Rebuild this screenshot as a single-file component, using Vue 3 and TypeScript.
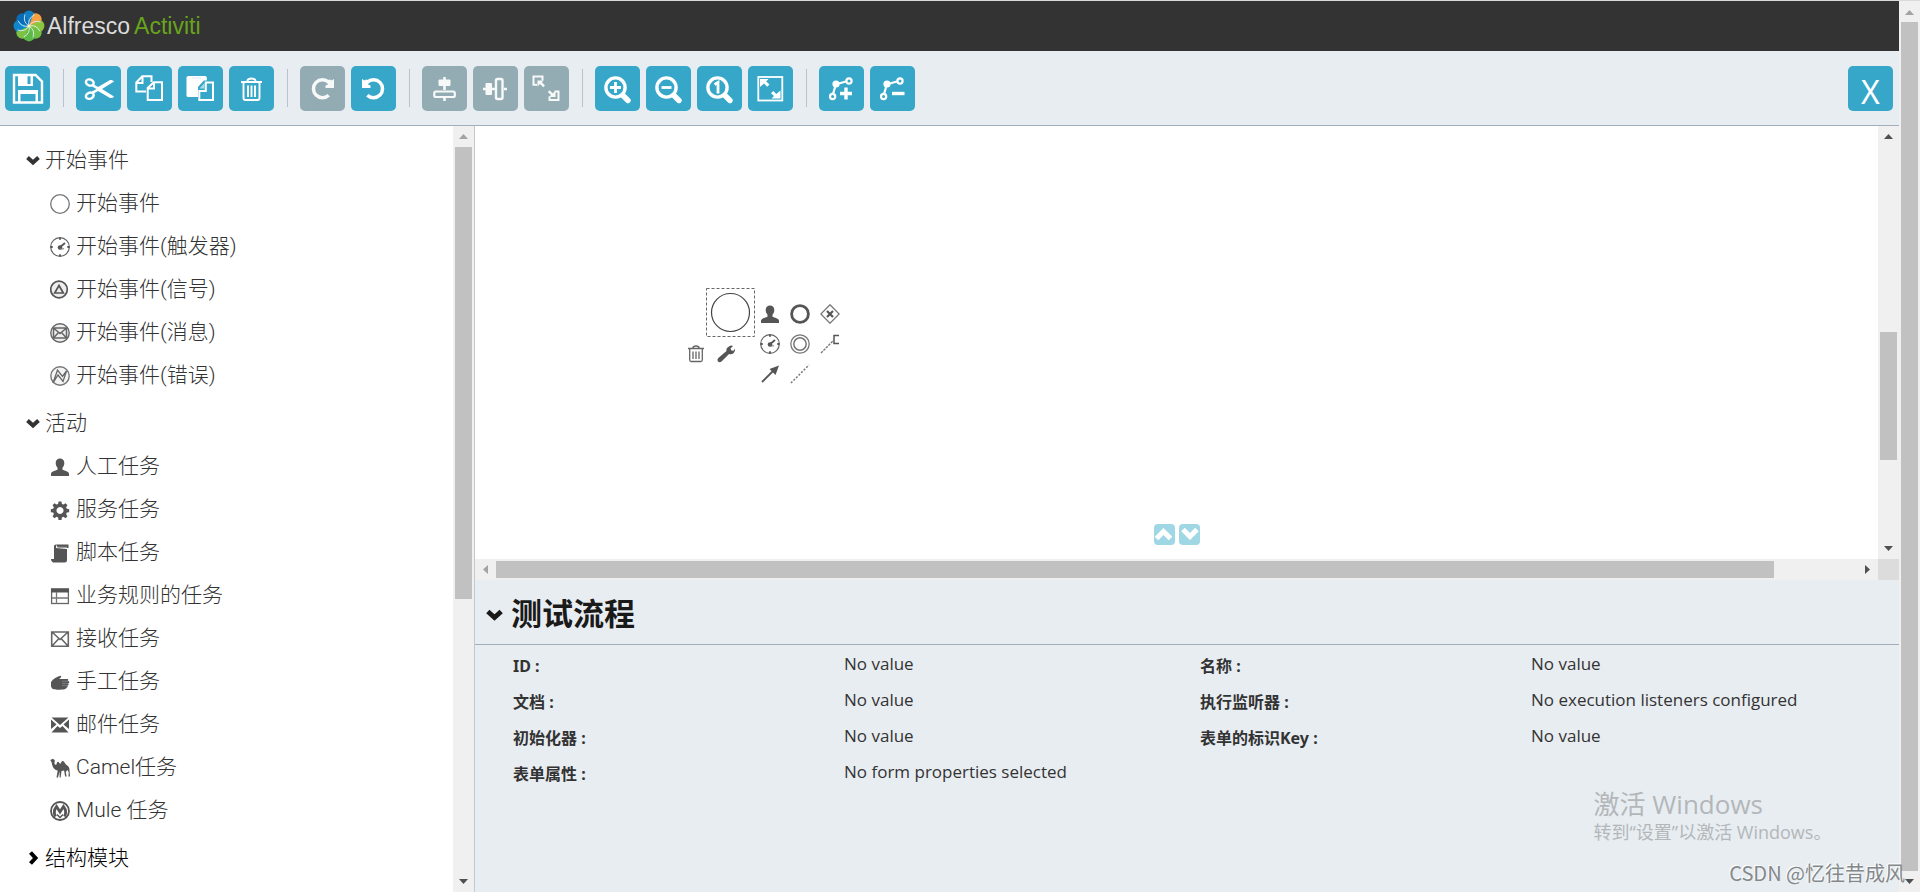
<script setup lang="ts">
interface Tool { id: string; label: string; icon: string; disabled?: boolean }
interface PaletteItem { label: string; icon: string }
interface PaletteGroup { label: string; open: boolean; items: PaletteItem[] }
interface Property { label: string; value: string }

const zoomGlass = '<circle cx="20.5" cy="21.5" r="9.6" fill="none" stroke-width="3.4"/><path d="M28 29.5l5 5" stroke-width="5.4" stroke-linecap="round"/>'
const bendBase = '<path d="M14 28l3-10M18 18l9-2.5" stroke-width="2.2"/><circle cx="17" cy="18" r="3.6" fill="#fff" stroke="none"/><circle cx="13.6" cy="30.5" r="2.6" fill="none" stroke-width="2.2"/><circle cx="30" cy="15" r="2.6" fill="none" stroke-width="2.2"/>'

const toolGroups: Tool[][] = [
  [
    { id: 'save', label: '保存', icon: '<path d="M9 9h21.5l6.500 6.500V36.500H9z" fill="none" stroke-width="2.4"/><path d="M13 8h15v12H13zM22.500 10v8h3v-8z" fill="#fff" fill-rule="evenodd" stroke="none"/><path d="M13 24h20v13h-2.500v-9h-15v9H13z" fill="#fff" stroke="none"/>' },
  ],
  [
    { id: 'cut', label: '剪切', icon: '<ellipse cx="13.8" cy="16.5" rx="4" ry="3" fill="none" stroke-width="2.4" transform="rotate(20 13.8 16.5)"/><ellipse cx="13.8" cy="29.7" rx="4" ry="3" fill="none" stroke-width="2.4" transform="rotate(-20 13.8 29.7)"/><path d="M17 18l5 3 12-7q3-.5 4 1.500L26 23l12 7.500q-1 2-4 1.500l-12-7-5 3-1-2.500 4.500-2.500-4.500-2.500z" fill="#fff" stroke="none"/>' },
    { id: 'copy', label: '复制', icon: '<path d="M19 25.500H9.300V16.500l6-6.300H24.500V16M9.500 17H15.500V10.500" fill="none" stroke-width="2"/><path d="M20.700 22l6-5.800h8.300V34H20.700zM21 22.500h6V16.500" fill="none" stroke-width="2"/>' },
    { id: 'paste', label: '粘贴', icon: '<path d="M8.500 11l1.500-1h17.500l1.300 1v3.500h-3L20 21v10H9.500l-1-1z" fill="#fff" stroke="none"/><path d="M21.300 25h6.500V16.500H35V34H21.300z" fill="none" stroke-width="2"/><path d="M21.500 22.500l5-5.500v5.500z" fill="#a9dde9" stroke="none"/><path d="M14 12h9" stroke="#d5eef4" stroke-width="1"/>' },
    { id: 'delete', label: '删除', icon: '<path d="M12 16h21M18.500 15q0-2.500 4-2.500t4 2.500" fill="none" stroke-width="2"/><path d="M14.500 17v15q0 2 2 2h12q2 0 2-2V17M19 19.500v11.500M22.500 19.500v11.500M26 19.500v11.500" fill="none" stroke-width="1.9"/>' },
  ],
  [
    { id: 'redo', label: '重做', disabled: true, icon: '<path d="M28.700 29.200A9 9 0 1 1 28.700 16.200" fill="none" stroke-width="3.5"/><path d="M34 13v9h-8.500v-2.500l2.500-1-2-4 4-1 1.500 1z" fill="#fff" stroke="none"/>' },
    { id: 'undo', label: '撤销', icon: '<path d="M16.300 29.200A9 9 0 1 0 16.300 16.200" fill="none" stroke-width="3.5"/><path d="M11 13v9h8.500v-2.500l-2.500-1 2-4-4-1-1.500 1z" fill="#fff" stroke="none"/>' },
  ],
  [
    { id: 'align-v', label: '垂直对齐', disabled: true, icon: '<path d="M22.500 11v13M22.500 32v3" stroke-width="2.6"/><rect x="16.5" y="13.5" width="12" height="6.5" rx="1" fill="#fff" stroke="none"/><rect x="12.3" y="25.5" width="20.5" height="5.5" rx="1.5" fill="none" stroke-width="2.2"/>' },
    { id: 'align-h', label: '水平对齐', disabled: true, icon: '<path d="M10 23h12M31 23h3" stroke-width="2.6"/><rect x="12.5" y="17" width="6.5" height="12" rx="1" fill="#fff" stroke="none"/><rect x="23" y="13" width="6.5" height="20" rx="1.5" fill="none" stroke-width="2.4"/>' },
    { id: 'same-size', label: '相同大小', disabled: true, icon: '<path d="M13 18.800H9.500V10.500H18.500V14.500M30.500 25.500h4v8.500H25.500V30.500" fill="none" stroke-width="2"/><path d="M13.500 14.500h6l-1.600 1.700 3.100 3.200-1.800 1.800-3.200-3.100-2.500 2.400zM31.500 31h-6.500l2-2-3.200-3 1.700-1.700 3.200 3 2.800-2.400z" fill="#fff" stroke="none"/>' },
  ],
  [
    { id: 'zoom-in', label: '放大', icon: zoomGlass + '<path d="M15 21.500h11M20.500 16v11" stroke-width="2.8"/>' },
    { id: 'zoom-out', label: '缩小', icon: zoomGlass + '<path d="M15.500 21.500h10" stroke-width="2.8"/>' },
    { id: 'zoom-actual', label: '实际大小', icon: zoomGlass + '<path d="M17.500 18.500l3.500-2v11" fill="none" stroke-width="2.8"/>' },
    { id: 'zoom-fit', label: '适合窗口', icon: '<rect x="10.3" y="11" width="24" height="23.5" fill="none" stroke-width="1.8"/><path d="M12 13h8.500l-2.300 2.500 3.300 3-2.300 2.300-3.200-3.200-4 3.400zM32.500 32.500h-9l2.500-2.500-3-2.800 2.300-2.300 3 3 4.200-3.400z" fill="#fff" stroke="none"/>' },
  ],
  [
    { id: 'bend-add', label: '添加弯曲点', icon: bendBase + '<path d="M21 27.500h12M27 21.500v12" stroke-width="3.4"/>' },
    { id: 'bend-remove', label: '删除弯曲点', icon: bendBase + '<path d="M22 27.500h12.500" stroke-width="3.4"/>' },
  ],
]

const user = '<path d="M10 1.500c2.500 0 4.300 1.500 4.300 4.500 0 2-.8 3.600-1.800 4.800v2c2 1 6.500 1.500 6.500 4.200v2H1v-2c0-2.700 4.500-3.200 6.500-4.200v-2C6.500 9.600 5.700 8 5.700 6c0-3 1.800-4.500 4.300-4.500z" fill="#555"/>'
const timer = '<circle cx="10" cy="10" r="9.3" fill="none" stroke="#666" stroke-width="1.2"/><path d="M10 .5v2.200M10 17.300v2.200M.5 10h2.200M17.300 10h2.200M9 11l6-5" stroke="#555" stroke-width="1.8"/><circle cx="10" cy="10.5" r="2.3" fill="#555"/><path d="M10 12l4-.2" stroke="#777"/>'
const gear = '<path d="M8.500 1.500h3l.4 2.400 1.600.7 2-1.400 2 2-1.400 2 .7 1.600 2.400.4v3l-2.400.4-.7 1.600 1.400 2-2 2-2-1.400-1.600.7-.4 2.400h-3l-.4-2.400-1.600-.7-2 1.400-2-2 1.400-2-.7-1.600-2.400-.4v-3l2.400-.4.7-1.600-1.400-2 2-2 2 1.400 1.600-.7zM10 7a3.500 3.500 0 1 0 .01 0z" fill="#555" fill-rule="evenodd"/>'

const paletteGroups: PaletteGroup[] = [
  {
    label: '开始事件', open: true, items: [
      { label: '开始事件', icon: '<circle cx="10" cy="10" r="9.3" fill="none" stroke="#777" stroke-width="1.3"/>' },
      { label: '开始事件(触发器)', icon: timer },
      { label: '开始事件(信号)', icon: '<circle cx="9" cy="9.5" r="8.3" fill="#eee" stroke="#555" stroke-width="1.7"/><path d="M9 5.500l4.300 7.500H4.700z" fill="none" stroke="#555" stroke-width="1.7"/>' },
      { label: '开始事件(消息)', icon: '<circle cx="10" cy="10" r="9.2" fill="#eee" stroke="#666" stroke-width="1.4"/><path d="M3.500 5h13v10h-13zM3.500 5l6.500 5.500L16.500 5M3.500 15l5-5.500M16.500 15l-5-5.500" fill="none" stroke="#666" stroke-width="1.5"/>' },
      { label: '开始事件(错误)', icon: '<circle cx="10" cy="10" r="9.2" fill="#f4f4f4" stroke="#777" stroke-width="1.4"/><path d="M3 17l4.500-13 5 6.500L16.500 5 13 15.500 8 9z" fill="none" stroke="#666" stroke-width="1.3"/>' },
    ],
  },
  {
    label: '活动', open: true, items: [
      { label: '人工任务', icon: user },
      { label: '服务任务', icon: gear },
      { label: '脚本任务', icon: '<path d="M6 1.500h12.500v3.500H8.500l-1.500-1.500zM4 3q0-1.500 2-1.500V5l11 1v11q0 2.500-2.500 2.500H3Q1 19 1 16h3z" fill="#555"/><path d="M6.500 4.300H17" stroke="#ccc" stroke-width=".8"/>' },
      { label: '业务规则的任务', icon: '<rect x="1.6" y="3" width="16.8" height="14.5" fill="#fff" stroke="#666" stroke-width="1.3"/><path d="M1 2.500h18v4H1z" fill="#555"/><path d="M6.500 6v11.500M2 12h16.500" stroke="#777" stroke-width="1.3"/>' },
      { label: '接收任务', icon: '<path d="M1.700 3h16.600v14.300H1.700zM2 3l8 7.500L18 3M2 17l6.500-7M18 17l-6.500-7" fill="none" stroke="#666" stroke-width="1.6"/>' },
      { label: '手工任务', icon: '<path d="M1 10c2-3 6-5.500 10-6.200.8 1-.3 2.200-2 3.200h8.500c1 0 1 1.800 0 2h1c1 .2 1 2 0 2.200h-.5c.8.300.8 2-.2 2.200h-.5c.6.400.4 1.800-.5 2-1 1.400-2 2-5 2-5 .3-10.300 1-10.800-3.400z" fill="#555"/><path d="M12 9.200h6M12 11.400h6M12 13.600h5" stroke="#999" stroke-width=".6"/>' },
      { label: '邮件任务', icon: '<path d="M1.500 2.500h17L10 10zM1 4.500l5.500 5L1 14zM19 4.500l-5.500 5L19 14zM1.500 17.500L7.500 11l2.500 2 2.500-2 6 6.500z" fill="#555"/>' },
      { label: 'Camel任务', icon: '<path d="M.3 2L3 .8l1.800 1.500-.4 3.200c.6 1.500 1.500 1.500 2 1C7 3.500 8.300 2.800 9.300 5c.5 1 1.200 1 1.700-.3 1-2.500 2.700-2.200 4 .5 1 1.800 3.600 2.300 4.300 5l.3 3.300.4 5h-1.500l.2-4.500-1.400-2-1.500 2 .8 4.500h-1.500l-1-6-2.600.4-.8 6.600h-1l-.2-6L8 19.500H6.500l1.200-7C4.500 12 2.200 9 1.700 4.500z" fill="#555"/>' },
      { label: 'Mule 任务', icon: '<circle cx="10" cy="10" r="9" fill="#fff" stroke="#555" stroke-width="1.8"/><path d="M5.500 15.500C3 11 4.500 8 6.500 5.500L10 11l3.500-5.500c2 2.500 3.500 5.500 1 10" fill="none" stroke="#555" stroke-width="2.8"/><path d="M7 13.500l3 3 3-3" fill="none" stroke="#555" stroke-width="1.5"/>' },
    ],
  },
  { label: '结构模块', open: false, items: [] },
]

const quickActions: PaletteItem[] = [
  { label: '人工任务', icon: user },
  { label: '结束事件', icon: '<circle cx="10" cy="10" r="8.4" fill="none" stroke="#555" stroke-width="2.8"/>' },
  { label: '互斥网关', icon: '<path d="M10 .8L19.200 10 10 19.200.8 10z" fill="none" stroke="#777" stroke-width="1.3"/><path d="M7 7l6 6M13 7l-6 6" stroke="#555" stroke-width="2.2"/>' },
  { label: '定时事件', icon: timer },
  { label: '中间事件', icon: '<circle cx="10" cy="10" r="9.2" fill="none" stroke="#777" stroke-width="1.3"/><circle cx="10" cy="10" r="6.2" fill="none" stroke="#777" stroke-width="1.5"/>' },
  { label: '注释', icon: '<path d="M1 19L13 7" stroke="#777" stroke-width="1.4" stroke-dasharray="2.5 1"/><path d="M19 1.500h-5v8h5" fill="none" stroke="#555" stroke-width="1.5"/>' },
  { label: '顺序流', icon: '<path d="M2 18L13 7" stroke="#555" stroke-width="1.8"/><path d="M19 1.500L9.500 5l6 6z" fill="#555"/>' },
  { label: '关联', icon: '<path d="M1 19L19 1" stroke="#777" stroke-width="1.5" stroke-dasharray="2 1.6"/>' },
]

const properties: Property[] = [
  { label: 'ID', value: 'No value' },
  { label: '名称', value: 'No value' },
  { label: '文档', value: 'No value' },
  { label: '执行监听器', value: 'No execution listeners configured' },
  { label: '初始化器', value: 'No value' },
  { label: '表单的标识Key', value: 'No value' },
  { label: '表单属性', value: 'No form properties selected' },
]

const petals = [
  { angle: 0, color: '#0f7fc6' },
  { angle: 45, color: '#f7a043' },
  { angle: 90, color: '#8cc63f' },
  { angle: 135, color: '#6fbf44' },
  { angle: 180, color: '#5cb947' },
  { angle: 225, color: '#7cc242' },
  { angle: 270, color: '#0e86cc' },
  { angle: 315, color: '#0a6cb8' },
]
</script>

<template>
  <div class="window">
    <div class="app">
      <header class="header">
        <a class="brand" href="#" aria-label="Alfresco Activiti">
          <svg class="flower" viewBox="0 0 32 32" aria-hidden="true">
            <g v-for="petal in petals" :key="petal.angle" :transform="`rotate(${petal.angle} 16 16)`">
              <circle cx="16" cy="6.8" r="6.2" :fill="petal.color" />
            </g>
            <g v-for="petal in petals" :key="petal.angle" :transform="`rotate(${petal.angle} 16 16)`">
              <path d="M16 16L10.500 4.500Q16 0 21.500 4.500z" :fill="petal.color" />
            </g>
            <g v-for="petal in petals" :key="petal.angle" :transform="`rotate(${petal.angle} 16 16)`">
              <path d="M16 16Q9.500 12 12 4.500" fill="none" stroke="#d9edf0" stroke-width=".9" />
            </g>
            <circle cx="16" cy="16" r="1.6" fill="#fff3b8" />
          </svg>
          <span class="brand-main">Alfresco</span>
          <span class="brand-sub">Activiti</span>
        </a>
      </header>

      <div class="toolbar" role="toolbar">
        <div v-for="(group, g) in toolGroups" :key="g" class="tool-group">
          <button v-for="tool in group" :key="tool.id" type="button" class="tool" :disabled="tool.disabled" :aria-label="tool.label">
            <svg viewBox="0 0 45 45" stroke="#fff" v-html="tool.icon"></svg>
          </button>
        </div>
        <button type="button" class="tool close">X</button>
      </div>

      <div class="body">
        <aside class="sidebar">
          <nav class="palette">
            <section v-for="group in paletteGroups" :key="group.label" class="palette-group">
              <button type="button" class="group-title" :class="{ closed: !group.open }" :aria-expanded="group.open">
                <svg class="chevron" viewBox="0 0 14 14" aria-hidden="true"><path d="M1.500 4.500L7 9.500l5.500-5" /></svg>
                <span>{{ group.label }}</span>
              </button>
              <ul v-if="group.items.length" class="items">
                <li v-for="item in group.items" :key="item.label" class="item">
                  <svg class="icon" viewBox="0 0 20 20" aria-hidden="true" v-html="item.icon"></svg>
                  <span>{{ item.label }}</span>
                </li>
              </ul>
            </section>
          </nav>
          <div class="vscroll side-scroll" aria-hidden="true">
            <svg class="arrow dim" viewBox="0 0 21 21"><path d="M6 13h9l-4.500-5z" /></svg>
            <div class="track"><i class="thumb"></i><i class="rest"></i></div>
            <svg class="arrow" viewBox="0 0 21 21"><path d="M6 8h9l-4.500 5z" /></svg>
          </div>
        </aside>

        <main class="main">
          <div class="canvas-wrap">
            <div class="canvas">
              <svg class="node" viewBox="0 0 49 49" role="img" aria-label="开始事件">
                <rect x=".5" y=".5" width="48" height="48" fill="none" stroke="#666" stroke-dasharray="3 2" />
                <circle cx="24.5" cy="24.5" r="19" fill="#fff" stroke="#444" stroke-width="1.2" />
              </svg>
              <div class="node-tools">
                <button type="button" class="mini" aria-label="删除">
                  <svg viewBox="0 0 20 20" fill="none" stroke="#666"><path d="M2 4.500h16M7 4q0-2 3-2t3 2" stroke-width="1.5" /><path d="M3.700 5v11q0 1.500 1.500 1.500h9.600q1.500 0 1.500-1.500V5M7 7.500v7.500M10 7.500v7.500M13 7.500v7.500" stroke-width="1.3" /></svg>
                </button>
                <button type="button" class="mini" aria-label="更改类型">
                  <svg viewBox="0 0 20 20"><path d="M13 2.500q2-1.500 4-.5l-2.500 2.500 1 2 2 .2 1.500-2.200q.5 3-1.500 4.800-2 1.500-4.500.7l-7.500 7.500q-2 1.500-3.700-.2-1-1.500.5-3.300L10.500 7q-.8-2.800 2.500-4.500z" fill="#555" /></svg>
                </button>
              </div>
              <div class="quick">
                <button v-for="action in quickActions" :key="action.label" type="button" class="mini" :aria-label="action.label">
                  <svg viewBox="0 0 20 20" v-html="action.icon"></svg>
                </button>
              </div>
              <div class="resizers">
                <button type="button" class="resize" aria-label="向上"><svg viewBox="0 0 21 21"><path d="M2.500 14.500L9.500 7.500l7 7" /></svg></button>
                <button type="button" class="resize" aria-label="向下"><svg viewBox="0 0 21 21"><path d="M4 5.500l7 7 7-7" /></svg></button>
              </div>
            </div>
            <div class="vscroll canvas-vscroll" aria-hidden="true">
              <svg class="arrow" viewBox="0 0 21 21"><path d="M6 13h9l-4.500-5z" /></svg>
              <div class="track"><i class="lead"></i><i class="thumb"></i><i class="rest"></i></div>
              <svg class="arrow" viewBox="0 0 21 21"><path d="M6 8h9l-4.500 5z" /></svg>
            </div>
            <div class="hscroll" aria-hidden="true">
              <svg class="arrow dim" viewBox="0 0 21 21"><path d="M13 6v9l-5-4.500z" /></svg>
              <div class="track"><i class="thumb"></i><i class="rest"></i></div>
              <svg class="arrow" viewBox="0 0 21 21"><path d="M8 6v9l5-4.500z" /></svg>
            </div>
            <div class="corner"></div>
          </div>

          <section class="properties">
            <h2 class="prop-title">
              <svg class="chevron" viewBox="0 0 14 14" aria-hidden="true"><path d="M1.500 4.500L7 9.500l5.500-5" /></svg>
              <span>测试流程</span>
            </h2>
            <dl class="prop-grid">
              <template v-for="prop in properties" :key="prop.label">
                <dt>{{ prop.label }} :</dt>
                <dd>{{ prop.value }}</dd>
              </template>
            </dl>
          </section>
        </main>
      </div>
    </div>

    <div class="vscroll page-scroll" aria-hidden="true">
      <svg class="arrow dim" viewBox="0 0 21 21"><path d="M6 14h9l-4.500-5z" /></svg>
      <div class="track"><i class="thumb"></i></div>
      <svg class="arrow" viewBox="0 0 21 21"><path d="M6 8h9l-4.500 5z" /></svg>
    </div>

    <div class="activation">
      <p class="activation-title">激活 Windows</p>
      <p class="activation-text">转到“设置”以激活 Windows。</p>
    </div>
    <div class="credit">CSDN @忆往昔成风</div>
  </div>
</template>

<style>
body { margin: 0; }
</style>

<style scoped>
.window {
  position: relative;
  display: flex;
  box-sizing: border-box;
  min-height: 100vh;
  border-top: 1px solid #d6dbda;
  overflow: hidden;
  background: #fff;
  color: #333;
  font-family: "Liberation Sans", "Noto Sans CJK SC", sans-serif;
}
button { padding: 0; border: 0; background: none; color: inherit; font: inherit; cursor: pointer; }
svg { display: block; }
.app { flex: 1; min-width: 0; display: flex; flex-direction: column; }

.header { display: flex; align-items: center; height: 50px; background: #333; }
.brand { display: flex; align-items: center; margin-left: 13px; font: 23px/30px "Liberation Sans", sans-serif; text-decoration: none; }
.flower { width: 32px; height: 32px; margin-right: 2px; }
.brand-main { color: #dcdcdc; }
.brand-sub { margin-left: 4px; color: #68a51c; }

.toolbar { display: flex; align-items: center; height: 74px; padding: 0 6px 0 5px; border-bottom: 1px solid #a3aebb; background: #e8edf1; }
.tool-group { display: flex; align-items: center; gap: 6px; }
.tool-group + .tool-group::before { content: ""; width: 1px; height: 38px; margin: 0 6px 0 13px; background: #bac2cb; }
.tool { width: 45px; height: 45px; border-radius: 5px; background: #36a7c9; color: #fff; }
.tool:disabled { background: #93acb3; }
.tool:disabled svg { opacity: .93; }
.close { margin-left: auto; padding-top: 8px; font: 32px/36px "Noto Sans", sans-serif; }

.body { flex: 1; display: flex; min-height: 0; }
.sidebar { display: flex; flex: 0 0 474px; border-right: 1px solid #c4c9ce; }
.palette { flex: 1; padding: 12px 0 0 26px; font-size: 21px; line-height: 42px; font-weight: 300; font-family: Roboto, "Noto Sans CJK SC Light", "Noto Sans CJK SC", sans-serif; }
.palette-group { margin-bottom: 5px; }
.group-title { display: flex; align-items: center; gap: 5px; height: 43px; }
.chevron { width: 14px; height: 14px; fill: none; stroke: #333; stroke-width: 4; }
.closed { color: #000; }
.closed .chevron { stroke: #000; transform: rotate(-90deg); }
.items { margin: 0; padding: 0 0 0 24px; list-style: none; }
.item { display: flex; align-items: center; gap: 6px; height: 43px; }
.icon { width: 20px; height: 20px; margin-top: 3px; }

.vscroll { display: flex; flex-direction: column; width: 21px; background: #f0f0f0; }
.vscroll .track { flex: 1; display: flex; flex-direction: column; padding: 0 2px; }
.arrow { flex: none; width: 21px; height: 21px; fill: #505050; }
.dim { fill: #a3a3a3; }
.thumb { background: #c1c1c1; }
.side-scroll .thumb { flex: 452; }
.side-scroll .rest { flex: 272; }
.canvas-vscroll .lead { flex: 185; }
.canvas-vscroll .thumb { flex: 128; }
.canvas-vscroll .rest { flex: 78; }
.page-scroll .thumb { flex: 1; }
.hscroll { display: flex; height: 21px; background: #f0f0f0; }
.hscroll .track { flex: 1; display: flex; padding: 2px 0; }
.hscroll .thumb { flex: 1278; }
.hscroll .rest { flex: 83; }
.corner { background: #dcdcdc; }

.main { flex: 1; display: grid; grid-template-rows: 454fr 312fr; min-width: 0; }
.canvas-wrap { display: grid; grid-template-columns: 1fr 21px; grid-template-rows: 1fr 21px; }
.canvas { position: relative; background: #fff; }
.node { position: absolute; left: 231px; top: 162px; width: 49px; height: 49px; }
.node-tools { position: absolute; left: 211px; top: 218px; display: flex; gap: 10px; }
.quick { position: absolute; left: 285px; top: 178px; display: grid; grid-template-columns: repeat(3, 20px); gap: 10px; }
.mini { width: 20px; height: 20px; }
.resizers { position: absolute; bottom: 14px; left: 50%; display: flex; gap: 4px; margin-left: -23px; }
.resize { width: 21px; height: 21px; border-radius: 4px; background: #9fd7e4; }
.resize path { fill: none; stroke: #fff; stroke-width: 5; }

.properties { background: #e8edf1; font-family: "Noto Sans", "Noto Sans CJK SC", sans-serif; }
.prop-title { display: flex; align-items: center; gap: 8px; height: 64px; margin: 0; padding-left: 11px; border-bottom: 1px solid #a3aebb; color: #1a1a1a; font: 700 31px/64px "Noto Sans CJK SC", sans-serif; }
.prop-title .chevron { width: 17px; height: 17px; margin-top: 4px; stroke: #1a1a1a; }
.prop-grid { display: grid; grid-template-columns: 331fr 356fr 331fr 368fr; margin: 0; padding: 3px 0 0 38px; font-size: 16px; }
.prop-grid dt { padding-top: 1px; line-height: 35px; font-weight: 700; }
.prop-grid dd { margin: 0; font-family: "Open Sans", sans-serif; font-size: 17px; line-height: 32px; }

.activation { position: absolute; left: 83%; bottom: 48px; color: #b3b7ba; font-family: "Open Sans", "Noto Sans CJK SC", sans-serif; }
.activation p { margin: 0; white-space: nowrap; }
.activation-title { font-size: 26px; line-height: 32px; }
.activation-text { font-size: 18px; line-height: 24px; }
.credit { position: absolute; right: 15px; bottom: 6px; color: #84888b; font: 20px/26px "Noto Sans CJK SC", sans-serif; text-shadow: -1px -1px 0 #fff; white-space: nowrap; }
</style>
